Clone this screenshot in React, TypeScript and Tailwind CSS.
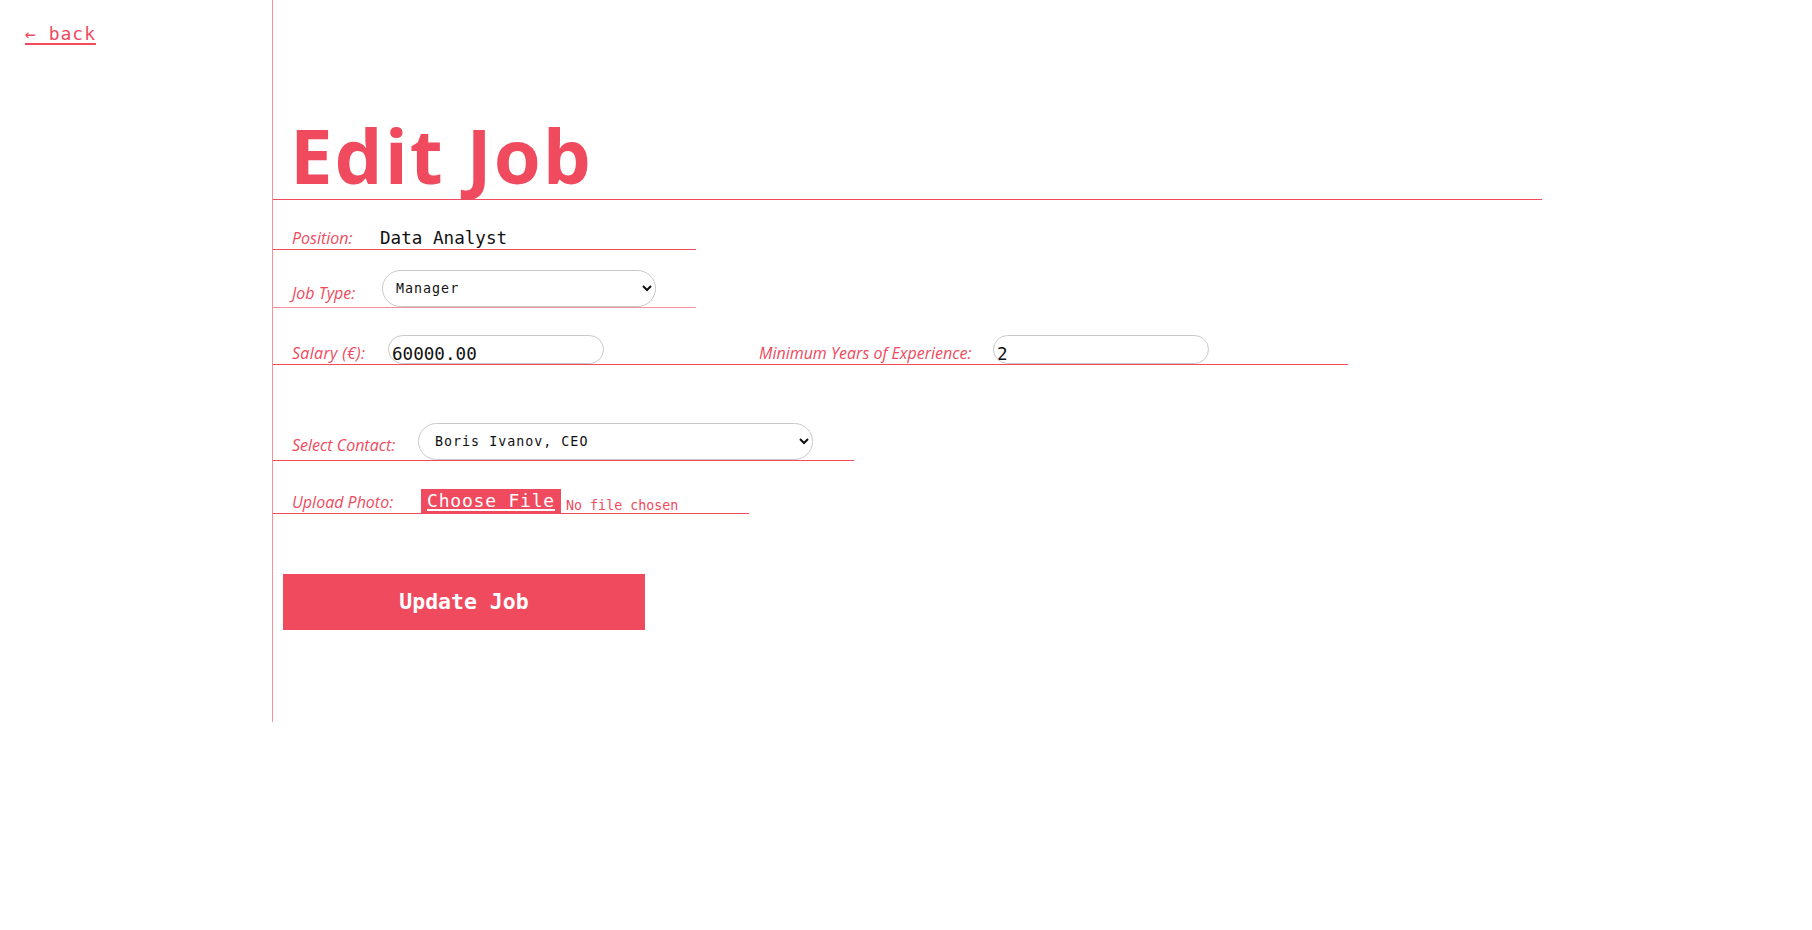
import React from "react";

const mono = { fontFamily: '"DejaVu Sans Mono", monospace' };
const sans = { fontFamily: '"Open Sans", "Noto Sans", sans-serif' };

export default function App() {
  return (
    <div className="flex min-h-screen bg-white" style={mono}>
      {/* left rail */}
      <aside className="w-[272px] shrink-0 pt-[23px] pl-[25px]">
        <a
          href="#"
          className="text-[18px] leading-none tracking-[1px] text-[#f04a5e] underline decoration-[2px] underline-offset-[3px]"
        >
          ← back
        </a>
      </aside>

      <main className="h-[722px] w-[1270px] shrink-0 border-l border-[#f4919d]">
        <h1
          className="border-b border-[#f04a5e] pt-[117px] pb-[6px] pl-[17px] text-[76px] leading-[76px] font-bold tracking-[2px] text-[#f04a5e]"
          style={sans}
        >
          Edit Job
        </h1>

        <form onSubmit={(e) => e.preventDefault()}>
          {/* position */}
          <div className="flex h-[50px] w-[423px] items-end border-b border-[#f04a5e] pl-[19px]">
            <label className="w-[88px] pb-[3px] text-[16px] leading-none italic text-[#f04a5e]" style={sans}>
              Position:
            </label>
            <span className="pb-[1px] text-[17.6px] leading-none text-[#111]">Data Analyst</span>
          </div>

          {/* job type */}
          <div className="flex h-[58px] w-[423px] items-end border-b border-[#f4919d] pl-[19px]">
            <label className="w-[90px] pb-[6px] text-[16px] leading-none italic text-[#f04a5e]" style={sans}>
              Job Type:
            </label>
            <select
              defaultValue="Manager"
              className="h-[37px] w-[274px] rounded-full border border-[#c9c9c9] bg-white pr-[10px] pl-[9px] text-[13.33px] tracking-[1px] text-[#111]"
              style={mono}
            >
              <option>Manager</option>
              <option>Developer</option>
              <option>Designer</option>
            </select>
          </div>

          {/* salary + experience */}
          <div className="flex h-[57px] w-[1075px] items-end border-b border-[#f04a5e] pl-[19px]">
            <label className="w-[96px] pb-[3px] text-[16px] leading-none tracking-[0.3px] italic text-[#f04a5e]" style={sans}>
              Salary (€):
            </label>
            <input
              defaultValue="60000.00"
              className="box-border h-[29px] w-[216px] rounded-full border border-[#c9c9c9] px-[3px] pt-[8px] text-[17.6px] leading-[20px] text-[#111] outline-none"
              style={mono}
            />
            <label className="ml-[155px] w-[234px] pb-[3px] text-[16px] leading-none italic text-[#f04a5e]" style={sans}>
              Minimum Years of Experience:
            </label>
            <input
              defaultValue="2"
              className="box-border h-[29px] w-[216px] rounded-full border border-[#c9c9c9] px-[3px] pt-[8px] text-[17.6px] leading-[20px] text-[#111] outline-none"
              style={mono}
            />
          </div>

          {/* contact */}
          <div className="flex h-[96px] w-[581px] items-end border-b border-[#f04a5e] pl-[19px]">
            <label className="w-[126px] pb-[7px] text-[16px] leading-none italic text-[#f04a5e]" style={sans}>
              Select Contact:
            </label>
            <select
              defaultValue="boris"
              className="h-[37px] w-[395px] rounded-full border border-[#c9c9c9] bg-white pr-[10px] pl-[12px] text-[13.33px] tracking-[1px] text-[#111]"
              style={mono}
            >
              <option value="boris">Boris Ivanov, CEO</option>
              <option value="maria">Maria Petrova, CTO</option>
            </select>
          </div>

          {/* upload */}
          <div className="flex h-[53px] w-[476px] items-end border-b border-[#f04a5e] pl-[19px]">
            <label className="w-[129px] pb-[3px] text-[16px] leading-none italic text-[#f04a5e]" style={sans}>
              Upload Photo:
            </label>
            <label className="flex items-end">
              <span className="h-[24px] bg-[#f04a5e] px-[6px] text-[18px] leading-[24px] tracking-[0.8px] text-white underline decoration-[2px] underline-offset-[2px]">
                Choose File
              </span>
              <span className="ml-[5px] pb-[1px] text-[13.33px] leading-none text-[#f04a5e]">No file chosen</span>
              <input type="file" className="hidden" />
            </label>
          </div>

          <button
            type="submit"
            className="mt-[60px] ml-[10px] h-[56px] w-[362px] bg-[#f04a5e] text-[21.5px] font-bold text-white"
            style={mono}
          >
            Update Job
          </button>
        </form>
      </main>
    </div>
  );
}
